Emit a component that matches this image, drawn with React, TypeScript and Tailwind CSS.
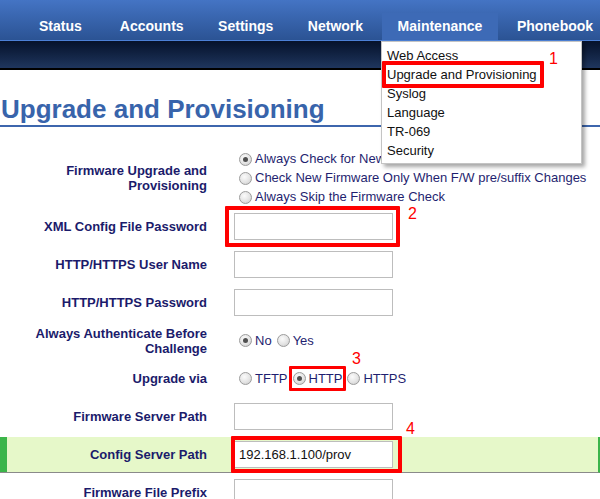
import React from "react";

const Radio = ({ checked = false }: { checked?: boolean }) => (
  <span className="ml-[5px] mr-[3px] flex h-[13px] w-[13px] shrink-0 items-center justify-center rounded-full border border-[#9c9c9c] bg-[radial-gradient(circle_at_40%_35%,#fbfbfb_0%,#e4e4e4_55%,#c6c6c6_100%)]">
    {checked && <span className="h-[5px] w-[5px] rounded-full bg-[#505050]" />}
  </span>
);

const RadioOpt = ({ label, checked = false }: { label: string; checked?: boolean }) => (
  <span className="flex items-center whitespace-nowrap">
    <Radio checked={checked} />
    <span>{label}</span>
  </span>
);

const TextBox = ({ value = "" }: { value?: string }) => (
  <input
    readOnly
    value={value}
    className="h-[27px] w-[159px] border border-[#bdbdbd] bg-white px-[4px] font-['Liberation_Sans',Arial,sans-serif] text-[13px] text-[#111] outline-none"
  />
);

const Row = ({ label, children }: { label: React.ReactNode; children: React.ReactNode }) => (
  <div className="flex h-[38px] items-center pt-[1px]">
    <div className="w-[207px] shrink-0 text-right text-[13px] font-bold leading-[15px] text-[#1b1b6b]">{label}</div>
    <div className="flex items-center pl-[27px] text-[13px] text-[#1f1f70]">{children}</div>
  </div>
);

const tabs = ["Status", "Accounts", "Settings", "Network", "Maintenance", "Phonebook"];
const menu = ["Web Access", "Upgrade and Provisioning", "Syslog", "Language", "TR-069", "Security"];

export default function App() {
  return (
    <div className="relative h-[499px] w-[600px] overflow-hidden bg-white font-['Liberation_Sans',Arial,sans-serif]">
      {/* Top navigation */}
      <div className="flex h-[40px] items-end bg-linear-to-b from-[#4474c4] to-[#2b5394] pl-[23px]">
        {tabs.map((t, i) => (
          <div
            key={t}
            className={
              "h-[27px] shrink-0 whitespace-nowrap px-[16px] text-[14px] font-bold leading-[27px] text-white " +
              (t === "Maintenance" ? "bg-[#3d6ab6] " : "") +
              (i === 0 ? "mr-[6px]" : "mr-[2.5px]")
            }
          >
            {t}
          </div>
        ))}
      </div>
      <div className="h-[1px] bg-[#4c80d6]" />
      <div className="h-[27px] bg-linear-to-b from-[#06122b] to-[#1f365e]" />
      <div className="h-[2px] bg-black" />

      {/* Title */}
      <div className="border-b-2 border-[#3d66ad] pb-[1px] pt-[24px]">
        <h1 className="pl-[1px] text-[26px] font-bold leading-[30px] text-[#3864ab]">Upgrade and Provisioning</h1>
      </div>

      {/* Form rows */}
      <div className="mt-[22px]">
        <div className="flex h-[58px] items-center">
          <div className="w-[207px] shrink-0 text-right text-[13px] font-bold leading-[15px] text-[#1b1b6b]">
            Firmware Upgrade and
            <br />
            Provisioning
          </div>
          <div className="flex flex-col pl-[27px] text-[13px] text-[#1f1f70]">
            <div className="flex h-[19px] items-center">
              <RadioOpt label="Always Check for New Firmware" checked />
            </div>
            <div className="flex h-[19px] items-center">
              <RadioOpt label="Check New Firmware Only When F/W pre/suffix Changes" />
            </div>
            <div className="flex h-[19px] items-center">
              <RadioOpt label="Always Skip the Firmware Check" />
            </div>
          </div>
        </div>

        <Row label="XML Config File Password">
          <TextBox />
        </Row>
        <Row label="HTTP/HTTPS User Name">
          <TextBox />
        </Row>
        <Row label="HTTP/HTTPS Password">
          <TextBox />
        </Row>
        <Row
          label={
            <>
              Always Authenticate Before
              <br />
              Challenge
            </>
          }
        >
          <RadioOpt label="No" checked />
          <RadioOpt label="Yes" />
        </Row>
        <Row label="Upgrade via">
          <RadioOpt label="TFTP" />
          <RadioOpt label="HTTP" checked />
          <RadioOpt label="HTTPS" />
        </Row>
        <Row label="Firmware Server Path">
          <TextBox />
        </Row>

        {/* Highlighted row */}
        <div className="h-[38px] pt-[2px]">
          <div className="flex h-[36px] items-center border-b border-r-2 border-b-[#8a8a8a] border-r-[#3bb54a] bg-[#e6f8c9]">
            <div className="h-full w-[7px] shrink-0 bg-[#3bb54a]" />
            <div className="w-[200px] shrink-0 text-right text-[13px] font-bold leading-[15px] text-[#1b1b6b]">
              Config Server Path
            </div>
            <div className="flex items-center pl-[27px]">
              <TextBox value="192.168.1.100/prov" />
            </div>
          </div>
        </div>

        <Row label="Firmware File Prefix">
          <TextBox />
        </Row>
      </div>

      {/* Dropdown menu */}
      <div className="absolute left-[381px] top-[41px] h-[123px] w-[201px] border border-[#c4c4c4] bg-white pl-[5px] pt-[4px] text-[13px] text-[#111] shadow-[3px_3px_4px_rgba(0,0,0,0.35)]">
        {menu.map((m) => (
          <div key={m} className="h-[19px] whitespace-nowrap leading-[19px]">
            {m}
          </div>
        ))}
      </div>

      {/* Annotations */}
      <div className="absolute left-[382px] top-[61px] h-[27px] w-[162px] rounded-[1px] border-4 border-[#ff0000]" />
      <div className="absolute left-[549px] top-[51px] text-[16px] leading-[16px] text-[#ff0000]">1</div>

      <div className="absolute left-[225px] top-[206px] h-[41px] w-[175px] rounded-[1px] border-4 border-[#ff0000]" />
      <div className="absolute left-[408px] top-[206px] text-[16px] leading-[16px] text-[#ff0000]">2</div>

      <div className="absolute left-[289px] top-[366px] h-[25px] w-[57px] rounded-[1px] border-[3px] border-[#ff0000]" />
      <div className="absolute left-[352px] top-[351px] text-[16px] leading-[16px] text-[#ff0000]">3</div>

      <div className="absolute left-[231px] top-[436px] h-[37px] w-[171px] rounded-[1px] border-4 border-[#ff0000]" />
      <div className="absolute left-[406px] top-[421px] text-[16px] leading-[16px] text-[#ff0000]">4</div>
    </div>
  );
}
